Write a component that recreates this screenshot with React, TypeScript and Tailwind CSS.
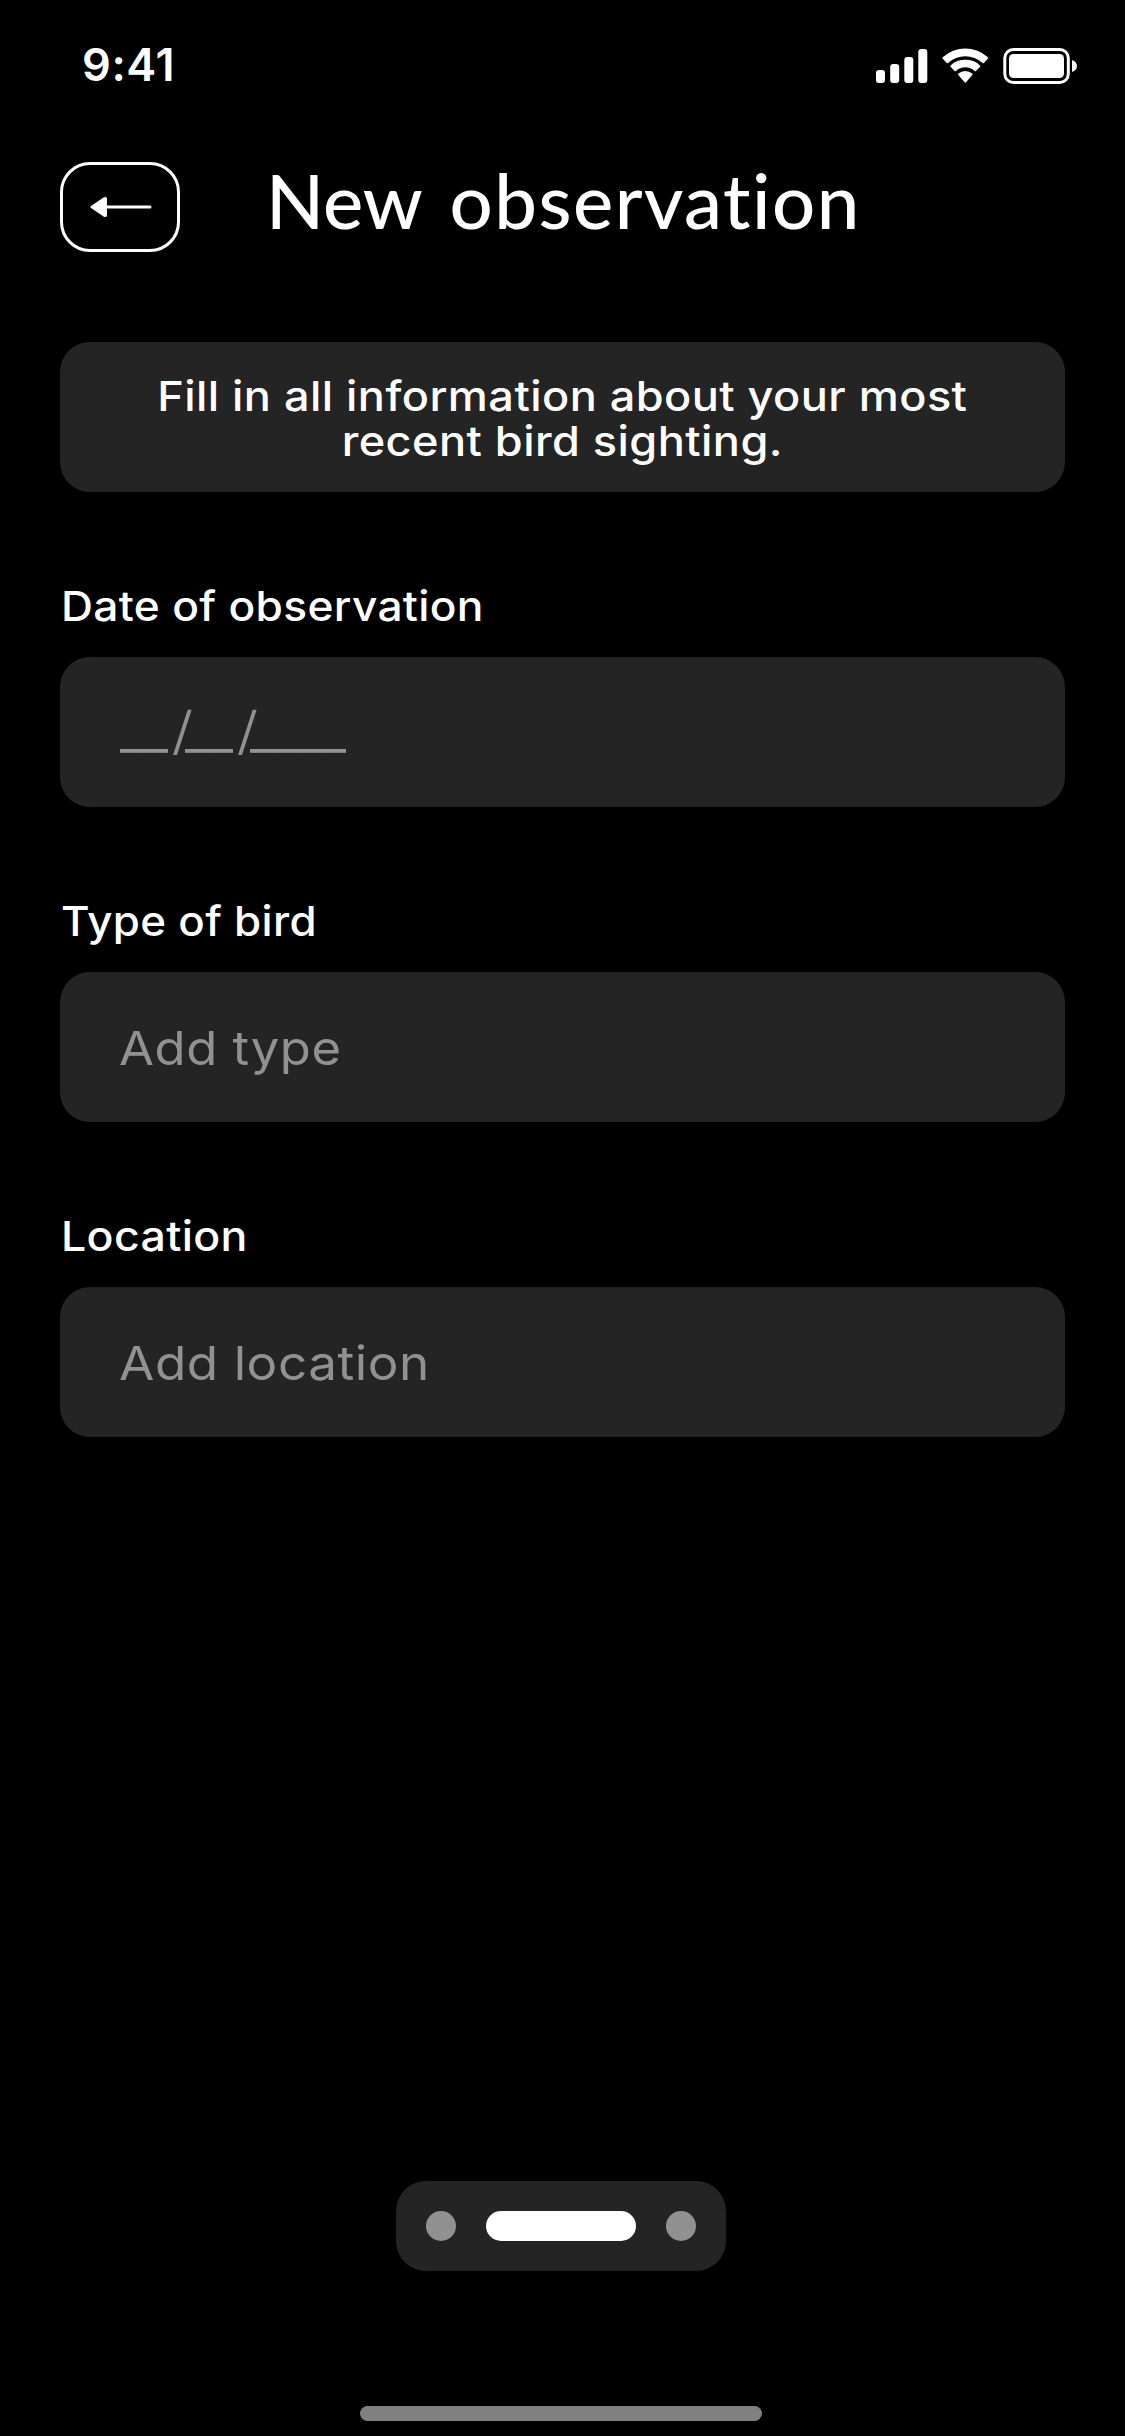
import React from 'react';

function Signal() {
  return (
    <svg className="h-[36px] w-[54px]" viewBox="0 0 54 36" fill="#fff">
      <rect x="0" y="22" width="9" height="13" rx="3" />
      <rect x="14.2" y="16" width="9" height="19" rx="3" />
      <rect x="28.3" y="9" width="9" height="26" rx="3" />
      <rect x="42.3" y="1" width="9" height="34" rx="3" />
    </svg>
  );
}

function Wifi() {
  return (
    <svg className="h-[36px] w-[47px]" viewBox="0 0 47 36" fill="#fff">
      <path d="M0.6 10.6Q0 9.9 0.7 9.2A33.6 33.6 0 0 1 45.9 9.2Q46.6 9.9 46 10.6L41.9 14.9Q41.2 15.6 40.5 14.9A25.5 25.5 0 0 0 6.1 14.9Q5.4 15.6 4.7 14.9Z" />
      <path d="M8.5 18.8Q7.9 18.1 8.6 17.4A21.6 21.6 0 0 1 38 17.4Q38.7 18.1 38.1 18.8L34 23Q33.3 23.7 32.6 23A13.7 13.7 0 0 0 14 23Q13.3 23.7 12.6 23Z" />
      <path d="M16.3 26.9Q15.6 26.2 16.4 25.5A10.6 10.6 0 0 1 30.2 25.5Q31 26.2 30.3 26.9L24 34.3Q23.3 35 22.6 34.3Z" />
    </svg>
  );
}

function Battery() {
  return (
    <svg className="h-[36px] w-[75px]" viewBox="0 0 75 36" fill="none">
      <rect x="1.8" y="1.5" width="63.5" height="33" rx="8.5" stroke="#fff" strokeWidth="3" />
      <rect x="6" y="6" width="55" height="24" rx="4.5" fill="#fff" />
      <path d="M69 12C72 13 74 15.200 74 18S72 23 69 24Z" fill="#fff" />
    </svg>
  );
}

function BackArrow() {
  return (
    <svg className="ml-[2px] h-[22px] w-[62px]" viewBox="0 0 62 22" fill="#fff">
      <path d="M1 12Q-0.300 11 1 10L13.500 1.500Q17 -0.200 17 3V19Q17 22.200 13.500 20.500Z" />
      <rect x="15" y="9.500" width="46.500" height="3" rx="1.500" />
    </svg>
  );
}

function Field({ label, labelScale, children }: { label: string; labelScale: string; children: React.ReactNode }) {
  return (
    <label className="flex flex-col gap-[26px]">
      <span className={`ml-px origin-left text-[41px] leading-[50px] font-[520] tracking-[0.3px] ${labelScale}`}>{label}</span>
      <span className="flex h-[150px] items-center rounded-[30px] bg-[#242424] pt-[2px] pr-[60px] pl-[59px] text-[47px] text-[#919191]">
        {children}
      </span>
    </label>
  );
}

function Slash() {
  return <span className="w-[17px] origin-left scale-x-120 pl-[3px] text-[52px] leading-[50px] font-light">/</span>;
}

function DateMask() {
  return (
    <span className="mb-[4px] ml-px flex items-baseline leading-[50px]">
      <span className="w-[48px] origin-left scale-x-112">__</span>
      <Slash />
      <span className="w-[48px] origin-left scale-x-112">__</span>
      <Slash />
      <span className="w-[97px] origin-left scale-x-112">____</span>
    </span>
  );
}

export default function App() {
  return (
    <div className="flex h-[2436px] w-[1125px] flex-col overflow-hidden bg-black font-['Inter',sans-serif] text-white">
      <div className="flex h-[132px] shrink-0 items-center justify-between pr-[47px] pl-[82px]">
        <span className="pb-[2px] text-[45px] leading-[54px] font-semibold tracking-[0.6px]">9:41</span>
        <div className="flex">
          <Signal />
          <span className="mr-[14px] ml-[12px]"><Wifi /></span>
          <Battery />
        </div>
      </div>

      <header className="mt-[30px] flex px-[60px]">
        <button aria-label="Back" className="flex h-[90px] w-[120px] items-center justify-center rounded-[30px] border-3 border-white">
          <BackArrow />
        </button>
        <h1 className="mt-[8px] ml-[86px] font-['Lato',sans-serif] text-[76px] leading-[60px] font-medium whitespace-nowrap [word-spacing:9px]">
          New <span className="tracking-[1.5px]">observation</span>
        </h1>
      </header>

      <main className="mt-[90px] flex flex-col px-[60px]">
        <p className="flex h-[150px] items-center justify-center rounded-[30px] bg-[#242424] pt-[3px] text-center text-[41px] leading-[45px] font-[520]">
          <span className="scale-x-110 tracking-[0.4px]">
            Fill in all information about your most
            <br />
            recent bird sighting.
          </span>
        </p>
        <form className="mt-[89px] flex flex-col gap-[89px]">
          <Field label="Date of observation" labelScale="scale-x-108"><DateMask /></Field>
          <Field label="Type of bird" labelScale="scale-x-107">
            <span className="origin-left scale-x-108 tracking-[0.5px]">Add type</span>
          </Field>
          <Field label="Location" labelScale="scale-x-109">
            <span className="origin-left scale-x-109 tracking-[0.5px]">Add location</span>
          </Field>
        </form>
      </main>

      <footer className="mt-auto flex w-[1122px] flex-col items-center pb-[15px]">
        <div className="flex h-[90px] w-[330px] items-center justify-center gap-[30px] rounded-[30px] bg-[#242424]">
          <span className="size-[30px] rounded-full bg-[#919191]" />
          <span className="h-[30px] w-[150px] rounded-full bg-white" />
          <span className="size-[30px] rounded-full bg-[#919191]" />
        </div>
        <div className="mt-[135px] h-[15px] w-[402px] rounded-full bg-[#808080]" />
      </footer>
    </div>
  );
}
